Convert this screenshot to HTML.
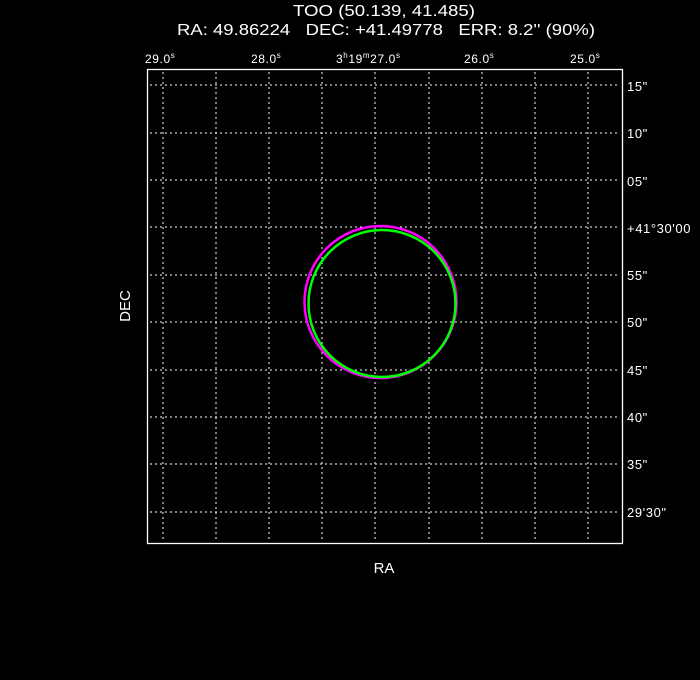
<!DOCTYPE html>
<html><head><meta charset="utf-8"><style>
html,body{margin:0;padding:0;background:#000;width:700px;height:680px;overflow:hidden}
svg text{font-family:"Liberation Sans","DejaVu Sans",sans-serif;fill:#fff;white-space:pre}
</style></head><body>
<svg width="700" height="680" xmlns="http://www.w3.org/2000/svg">
<text x="293" y="16" font-size="16" textLength="182" lengthAdjust="spacingAndGlyphs">TOO (50.139, 41.485)</text>
<text x="177" y="35" font-size="16" textLength="418" lengthAdjust="spacingAndGlyphs" xml:space="preserve">RA: 49.86224   DEC: +41.49778   ERR: 8.2'' (90%)</text>
<g font-size="12" letter-spacing="0.6">
<text x="145" y="63">29.0<tspan font-size="8" dy="-5">s</tspan></text>
<text x="251" y="63">28.0<tspan font-size="8" dy="-5">s</tspan></text>
<text x="336" y="63">3<tspan font-size="8" dy="-5">h</tspan><tspan dy="5">19</tspan><tspan font-size="8" dy="-5">m</tspan><tspan dy="5">27.0</tspan><tspan font-size="8" dy="-5">s</tspan></text>
<text x="464" y="63">26.0<tspan font-size="8" dy="-5">s</tspan></text>
<text x="570" y="63">25.0<tspan font-size="8" dy="-5">s</tspan></text>
</g>
<g stroke="#fff" stroke-width="1" stroke-dasharray="2,3" fill="none">
<line x1="163" y1="72" x2="163" y2="540"/><line x1="216" y1="72" x2="216" y2="540"/>
<line x1="269" y1="72" x2="269" y2="540"/><line x1="322" y1="72" x2="322" y2="540"/>
<line x1="375" y1="72" x2="375" y2="540"/><line x1="429" y1="72" x2="429" y2="540"/>
<line x1="482" y1="72" x2="482" y2="540"/><line x1="535" y1="72" x2="535" y2="540"/>
<line x1="588" y1="72" x2="588" y2="540"/>
<line x1="150" y1="85" x2="620" y2="85"/><line x1="150" y1="133" x2="620" y2="133"/>
<line x1="150" y1="180" x2="620" y2="180"/><line x1="150" y1="227" x2="620" y2="227"/>
<line x1="150" y1="275" x2="620" y2="275"/><line x1="150" y1="322" x2="620" y2="322"/>
<line x1="150" y1="370" x2="620" y2="370"/><line x1="150" y1="417" x2="620" y2="417"/>
<line x1="150" y1="464" x2="620" y2="464"/><line x1="150" y1="512" x2="620" y2="512"/>
</g>
<rect x="147.5" y="69.5" width="475" height="474" fill="none" stroke="#fff" stroke-width="1.3"/>
<g font-size="13" letter-spacing="0.6">
<text x="627" y="91">15"</text><text x="627" y="138">10"</text>
<text x="627" y="186">05"</text><text x="627" y="233">+41°30'00</text>
<text x="627" y="280">55"</text><text x="627" y="327">50"</text>
<text x="627" y="375">45"</text><text x="627" y="422">40"</text>
<text x="627" y="469">35"</text><text x="627" y="517">29'30"</text>
</g>
<circle cx="380.5" cy="302" r="76" fill="none" stroke="#f0f" stroke-width="2.5"/>
<circle cx="382" cy="303.5" r="73.5" fill="none" stroke="#0f0" stroke-width="2.5"/>
<text x="384" y="573" font-size="15" text-anchor="middle">RA</text>
<text transform="translate(130,306) rotate(-90)" font-size="15" text-anchor="middle">DEC</text>
</svg>
</body></html>
